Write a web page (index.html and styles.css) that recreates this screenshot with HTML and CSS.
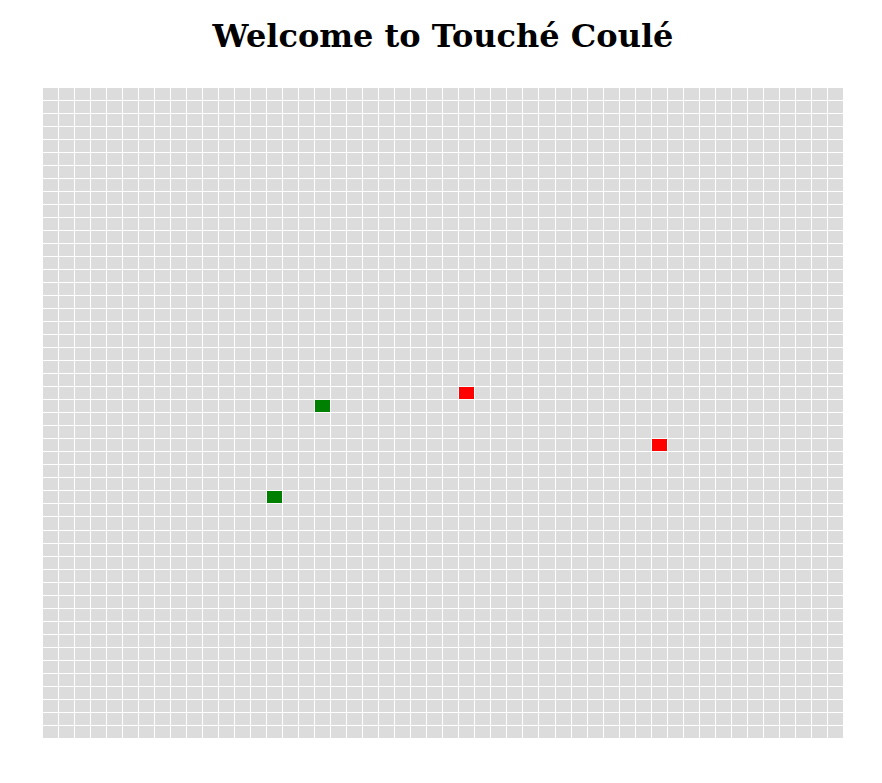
FILE: index.html
```html
<!DOCTYPE html>
<html>
<head>
<meta charset="utf-8">
<title>Touché Coulé</title>
<link rel="stylesheet" href="styles.css">
</head>
<body>
<h1 class="title">Welcome to Touché Coulé</h1>
<div class="board" id="board"></div>
<script src="script.js"></script>
</body>
</html>
```
FILE: styles.css
```css
html, body {
  margin: 0;
  padding: 0;
  background: #ffffff;
}
.title {
  margin: 18px 0 0;
  padding-left: 4px;
  font-family: "DejaVu Serif", serif;
  font-weight: bold;
  font-size: 32px;
  line-height: 37px;
  text-align: center;
  color: #000000;
}
.board {
  display: grid;
  grid-template-columns: repeat(50, 1fr);
  grid-template-rows: repeat(50, 1fr);
  gap: 1px;
  width: 799.8px;
  height: 649.75px;
  margin: 33px 0 0 43px;
}
.cell {
  background: #dcdcdc;
}
.cell.hit {
  background: #ff0000;
}
.cell.miss {
  background: #008000;
}
```
FILE: script.js
```js
var board = document.getElementById('board');
var marks = {
  '24,17': 'miss',
  '31,14': 'miss',
  '23,26': 'hit',
  '27,38': 'hit'
};
for (var r = 0; r < 50; r++) {
  for (var c = 0; c < 50; c++) {
    var d = document.createElement('div');
    d.className = 'cell' + (marks[r + ',' + c] ? ' ' + marks[r + ',' + c] : '');
    board.appendChild(d);
  }
}
```
